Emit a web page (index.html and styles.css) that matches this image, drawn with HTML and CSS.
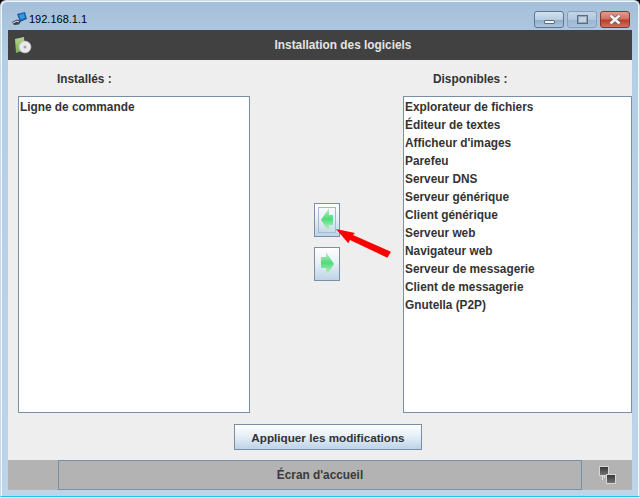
FILE: index.html
```html
<!DOCTYPE html>
<html lang="fr">
<head>
    <meta charset="UTF-8">
    <title>192.168.1.1</title>
    <link rel="stylesheet" href="styles.css">
</head>
<body>

<div class="window">
    <div class="titlebar">
        <div class="title">
            <svg class="app-icon" width="16" height="14" viewBox="0 0 16 14">
                <path d="M5 2 L13 0 L15 7 L8 10 Z" fill="#1a5cab"/>
                <path d="M7 3 L12 1.500 L13 6 L8.500 7.500 Z" fill="#2f9be8"/>
                <path d="M0 10 L5 7.500 L9 9 L7 12.500 L2 13 Z" fill="#39424d"/>
                <path d="M1 11 L5 9 L7 10" stroke="#e8edf2" fill="none"/>
            </svg>
            <span>192.168.1.1</span>
        </div>
        <div class="win-buttons">
            <div class="win-btn win-min"><span class="min-glyph"></span></div>
            <div class="win-btn win-max"><span class="max-glyph"></span></div>
            <div class="win-btn win-close">
                <svg width="14" height="11" viewBox="0 0 14 11">
                    <path d="M2.500 1.500 L11.500 9.500 M11.500 1.500 L2.500 9.500" stroke="#6d5f5d" stroke-width="4"/>
                    <path d="M2.500 1.500 L11.500 9.500 M11.500 1.500 L2.500 9.500" stroke="#f6f6f6" stroke-width="2.400"/>
                </svg>
            </div>
        </div>
    </div>

    <div class="content">
        <div class="header">
            <svg class="header-icon" width="18" height="18" viewBox="0 0 18 18">
                <defs>
                    <linearGradient id="boxGreen" x1="0" y1="0" x2="0" y2="1">
                        <stop offset="0" stop-color="#b4d88e"/>
                        <stop offset="1" stop-color="#7fa85c"/>
                    </linearGradient>
                </defs>
                <path d="M0 2 L9 0 L10 13 L1 16 Z" fill="url(#boxGreen)"/>
                <circle cx="10" cy="10" r="6" fill="#e9e9e9" stroke="#b5b5b5" stroke-width="0.600"/>
                <circle cx="10" cy="10" r="1.500" fill="#a5a5a5"/>
            </svg>
            <span>Installation des logiciels</span>
        </div>

        <div class="main">
            <div class="column column-left">
                <div class="column-title">Installés :</div>
                <ul class="list">
                    <li>Ligne de commande</li>
                </ul>
            </div>

            <div class="arrows">
                <button class="arrow-btn">
                    <span class="focus-ring">
                        <svg width="14" height="24" viewBox="0 0 14 24">
                            <defs>
                                <linearGradient id="greenFade" x1="0" y1="0" x2="0" y2="1">
                                    <stop offset="0" stop-color="#c9eed0"/>
                                    <stop offset="0.45" stop-color="#4fdc78"/>
                                    <stop offset="1" stop-color="#d5f2da"/>
                                </linearGradient>
                            </defs>
                            <path d="M1 12 L9 0 L9 7 L13 7 L13 17 L9 17 L9 24 Z" fill="url(#greenFade)"/>
                        </svg>
                    </span>
                </button>
                <button class="arrow-btn arrow-right">
                    <svg width="14" height="24" viewBox="0 0 14 24">
                        <path d="M13 12 L5 0 L5 5 L0 5 L0 16 L5 16 L5 24 Z" fill="url(#greenFade)"/>
                    </svg>
                </button>
            </div>

            <div class="column column-right">
                <div class="column-title">Disponibles :</div>
                <ul class="list">
                    <li>Explorateur de fichiers</li>
                    <li>Éditeur de textes</li>
                    <li>Afficheur d'images</li>
                    <li>Parefeu</li>
                    <li>Serveur DNS</li>
                    <li>Serveur générique</li>
                    <li>Client générique</li>
                    <li>Serveur web</li>
                    <li>Navigateur web</li>
                    <li>Serveur de messagerie</li>
                    <li>Client de messagerie</li>
                    <li>Gnutella (P2P)</li>
                </ul>
            </div>
        </div>

        <div class="apply-row">
            <button class="apply-btn">Appliquer les modifications</button>
        </div>

        <div class="footer">
            <div class="home-btn">Écran d'accueil</div>
            <svg class="net-icon" width="17" height="18" viewBox="0 0 17 18">
                <defs>
                    <linearGradient id="screenGrey" x1="0" y1="0" x2="0" y2="1">
                        <stop offset="0" stop-color="#333333"/>
                        <stop offset="1" stop-color="#777777"/>
                    </linearGradient>
                </defs>
                <rect x="0.500" y="0.500" width="9" height="9" fill="url(#screenGrey)" stroke="#d6d6d6"/>
                <path d="M3.500 10 V14 M5.500 10 V12" stroke="#e2e2e2"/>
                <rect x="7.500" y="8.500" width="9" height="9" fill="url(#screenGrey)" stroke="#d6d6d6"/>
            </svg>
        </div>
    </div>
</div>

<svg class="pointer" width="60" height="40" viewBox="0 0 60 40">
    <path d="M1 3 L20 7 L18 9 L56 25.700 L52.300 31.700 L15 14 L13.300 17.300 Z" fill="#fb0000"/>
</svg>

</body>
</html>
```

FILE: styles.css
```css
html, body {
    margin: 0;
    padding: 0;
    height: 100%;
    overflow: hidden;
}

body {
    position: relative;
    background-color: #0b0b0b;
    font-family: "Liberation Sans", Arial, sans-serif;
    font-size: 11.85px;
    font-weight: bold;
    color: #333333;
}

.window {
    box-sizing: border-box;
    width: 640px;
    height: 497px;
    border: 1px solid #c9dbeb;
    border-bottom-color: #24c5e4;
    border-radius: 6px 6px 0 0;
    padding: 0 7px 6px 7px;
    display: flex;
    flex-direction: column;
    background: linear-gradient(#a5bfd9, #b4cee6 60px, #bdd5ea);
    box-shadow: inset 1px 1px 0 #f2f7fb, inset -1px 0 0 #f2f7fb, 0 1px 0 #d8e6f0;
}

.titlebar {
    height: 29px;
    flex: none;
    display: flex;
    justify-content: space-between;
}

.title {
    box-sizing: border-box;
    display: flex;
    align-items: center;
    gap: 1px;
    margin-left: 4px;
    padding-top: 6px;
    font-weight: normal;
    font-size: 11px;
    color: #000000;
}

.win-buttons {
    display: flex;
    align-items: flex-start;
    padding-right: 2px;
}

.win-btn {
    box-sizing: border-box;
    height: 17px;
    margin-top: 10px;
    width: 30px;
    border: 1px solid #5d7590;
    border-radius: 3px;
    display: flex;
    justify-content: center;
    align-items: center;
    background: linear-gradient(#d3e1ef 0, #b9cde2 50%, #8fadcb 52%, #adc5dc 100%);
}

.win-max {
    margin-left: 3px;
    margin-right: 3px;
    border-color: #85a0bb;
    background: linear-gradient(#c4d6e8 0, #b1c8de 50%, #9ab6d2 52%, #aac2da 100%);
}

.win-close {
    border-color: #7c3a34;
    background: linear-gradient(#e39a8c 0, #d0705f 48%, #b63d2c 52%, #cf7060 100%);
}

.min-glyph {
    width: 9px;
    height: 2px;
    margin-top: 4px;
    background-color: #f2f4f6;
    border: 1px solid #5c6d80;
    border-radius: 1px;
}

.max-glyph {
    box-sizing: border-box;
    width: 11px;
    height: 9px;
    border: 1px solid #5c6d80;
    background-color: #c3d3e3;
    box-shadow: inset 0 0 0 1px #94a5b7;
}

.content {
    flex: 1;
    display: flex;
    flex-direction: column;
    background-color: #eeeeee;
    min-height: 0;
}

.header {
    position: relative;
    height: 30px;
    flex: none;
    display: flex;
    justify-content: center;
    align-items: center;
    padding-left: 46px;
    background-color: #414141;
    color: #e4e4e4;
}

.header-icon {
    position: absolute;
    left: 7px;
    top: 7px;
}

.main {
    flex: 1;
    display: flex;
    min-height: 0;
    padding: 0 0 0 10px;
}

.column {
    display: flex;
    flex-direction: column;
}

.column-left {
    width: 232px;
}

.column-right {
    width: 229px;
}

.column-title {
    height: 36px;
    line-height: 38px;
    flex: none;
}

.column-left .column-title {
    padding-left: 39px;
}

.column-right .column-title {
    padding-left: 30px;
}

.list {
    box-sizing: border-box;
    height: 317px;
    margin: 0;
    padding: 1px 0 0 1px;
    list-style: none;
    background-color: #ffffff;
    border: 1px solid #7a8ea6;
}

.list li {
    height: 18px;
    line-height: 18px;
}

.arrows {
    width: 153px;
    display: flex;
    flex-direction: column;
    align-items: center;
    gap: 10px;
    padding-top: 143px;
}

.arrow-btn {
    box-sizing: border-box;
    width: 26px;
    height: 34px;
    padding: 0;
    display: flex;
    justify-content: center;
    align-items: center;
    border: 1px solid #7a8ea6;
    background: linear-gradient(#ffffff, #e9f0f7 45%, #bcd3e8);
}

.arrow-right svg {
    margin-left: 2px;
}

.focus-ring {
    box-sizing: border-box;
    width: 18px;
    height: 26px;
    display: flex;
    justify-content: center;
    align-items: center;
    border: 1px solid #a3bad1;
}

.apply-row {
    flex: none;
    height: 47px;
    box-sizing: border-box;
    padding: 11px 0 0 16px;
    display: flex;
    justify-content: center;
    align-items: flex-start;
}

.apply-btn {
    box-sizing: border-box;
    width: 188px;
    height: 26px;
    padding: 0;
    border: 1px solid #7a8ea6;
    background: linear-gradient(#ffffff, #e4edf6 50%, #bcd3e8);
    font-family: inherit;
    font-size: 11.7px;
    font-weight: bold;
    color: #333333;
}

.footer {
    flex: none;
    height: 30px;
    display: flex;
    align-items: center;
    padding-left: 50px;
    background-color: #b3b3b3;
}

.home-btn {
    box-sizing: border-box;
    width: 524px;
    height: 30px;
    line-height: 28px;
    text-align: center;
    border: 1px solid #7a8ea6;
    color: #3a3a3a;
}

.net-icon {
    margin-left: 17px;
}

.pointer {
    position: absolute;
    left: 335px;
    top: 226px;
}
```
